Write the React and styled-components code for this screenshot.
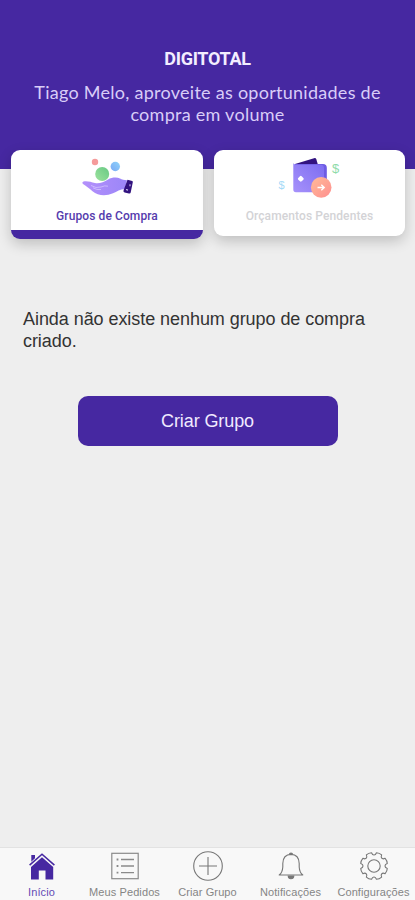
import { useState } from "react";
import styled, { createGlobalStyle } from "styled-components";

const purple = "#4628a1";

const GlobalStyle = createGlobalStyle`
    * {
        box-sizing: border-box;
    }

    body {
        margin: 0;
        background: #eeeeee;
    }
`;

const HandIcon = () => (
    <svg width="54" height="42" viewBox="80 156 54 42">
        <defs>
            <linearGradient id="hand" x1="0" y1="0" x2="1" y2="0">
                <stop offset="0" stopColor="#b490fb" />
                <stop offset="1" stopColor="#9b86f8" />
            </linearGradient>
            <linearGradient id="green" x1="1" y1="0" x2="0" y2="1">
                <stop offset="0" stopColor="#67c984" />
                <stop offset="1" stopColor="#9de29d" />
            </linearGradient>
            <linearGradient id="blue" x1="1" y1="0" x2="0" y2="1">
                <stop offset="0" stopColor="#8fd3fa" />
                <stop offset="1" stopColor="#7aa9f5" />
            </linearGradient>
        </defs>
        <circle cx="95" cy="162" r="3.2" fill="#f59b9b" />
        <circle cx="115.3" cy="166.5" r="4.7" fill="url(#blue)" />
        <path d="M83.5 181.5 C87 180.7 91 182 95 183 C99 184.2 104 181.6 108 179.4 C112 177.1 117 177 120 178.4 C122 179.4 124 180 127 180.2 L124.8 189 C120 189.4 117 191.5 113 193.3 C106 196.3 98 196 92.5 191.2 C89 188.2 86 186 83 184 C82 183 82.3 181.8 83.5 181.5 Z" fill="url(#hand)" />
        <path d="M91 185.5 Q96 188.7 101 187 Q105 185.2 108 186.2 M93 187.8 Q97 190.3 101 189.5" fill="none" stroke="#d9ccff" strokeWidth="0.7" />
        <circle cx="102.2" cy="174" r="7" fill="url(#green)" />
        <path d="M127.5 179.8 L132.2 181 Q133 181.4 132.8 182.2 L130.7 192.4 Q130.4 193.8 129 193.5 L124.6 192.4 Q123 192 123.6 190.3 Z" fill="#32137f" />
        <path d="M126 189.5 l2 0.6 M130 184.2 v2" stroke="#d5cbef" strokeWidth="1.1" />
    </svg>
);

const WalletIcon = () => (
    <svg width="66" height="42" viewBox="276 156 66 42">
        <defs>
            <linearGradient id="wallet" x1="1" y1="0" x2="0" y2="1">
                <stop offset="0" stopColor="#7c6cf0" />
                <stop offset="1" stopColor="#a792fb" />
            </linearGradient>
            <linearGradient id="coin" x1="0" y1="0" x2="1" y2="1">
                <stop offset="0" stopColor="#ffbb98" />
                <stop offset="1" stopColor="#ff8f8f" />
            </linearGradient>
        </defs>
        <path d="M294 164 L313 158.2 Q314.8 157.8 315.4 159.4 L317 165 H294 Z" fill="#32137f" />
        <path d="M293.5 164 H322 Q325.8 164 325.8 167.8 V189 Q325.8 192 322.8 192 H296 Z" fill="#6e5ce3" />
        <path d="M292.3 163 Q292.7 164.6 295 164.8 H320 Q323 165 323 168 V189.5 Q323 192.3 320 192.3 H295 Q292.3 192.3 292.3 189.5 Z" fill="url(#wallet)" />
        <rect x="297.4" y="176.4" width="4.8" height="4.8" rx="1.2" fill="#fff" transform="rotate(45 299.8 178.8)" />
        <circle cx="320.2" cy="187.4" r="10.3" fill="url(#coin)" />
        <path d="M316.5 187.5 H323 M320.3 184.8 L323.2 187.5 L320.3 190.2" fill="none" stroke="#fff" strokeWidth="1.4" />
        <text x="331" y="172.5" fontFamily="Liberation Sans, sans-serif" fontSize="13" fill="#8edba9">$</text>
        <text x="277.5" y="189" fontFamily="Liberation Sans, sans-serif" fontSize="11" fill="#a5daf7">$</text>
    </svg>
);

const HomeIcon = () => (
    <svg width="32" height="32" viewBox="0 0 32 32">
        <path d="M5.3 5 H9 V8.3 L5.3 11.7 Z" fill={purple} />
        <path d="M3.6 15.2 L16 4.2 L28.4 15.2" fill="none" stroke={purple} strokeWidth="1.6" />
        <path d="M16 7.2 L27.2 17 V29.4 H19.5 V20.6 H12.8 V29.4 H5 V17 Z" fill={purple} />
    </svg>
);

const ListIcon = () => (
    <svg width="32" height="32" viewBox="0 0 32 32" fill="none" stroke="#8a8a8a">
        <rect x="2.8" y="3.3" width="26.4" height="25.4" strokeWidth="1.2" />
        <path d="M12 9.5 H25 M12 16 H25 M12 22.7 H25" strokeWidth="1.3" />
        <path d="M7.6 9.5 H9.4 M7.6 16 H9.4 M7.6 22.7 H9.4" strokeWidth="1.8" />
    </svg>
);

const PlusIcon = () => (
    <svg width="32" height="32" viewBox="0 0 32 32" fill="none" stroke="#777" strokeWidth="1.1">
        <circle cx="16" cy="16" r="14.3" />
        <path d="M16 7 V25 M7 16 H25" />
    </svg>
);

const BellIcon = () => (
    <svg width="32" height="32" viewBox="0 0 32 32" fill="none" stroke="#777" strokeWidth="1.1">
        <path d="M4.2 25 Q7.5 22.5 7.8 17 V13.5 Q8 4.6 16 4.4 Q24 4.6 24.2 13.5 V17 Q24.5 22.5 27.8 25 Z" strokeLinejoin="round" />
        <path d="M14.5 4.2 Q14.5 3 16 3 Q17.5 3 17.5 4.2" fill="#777" />
        <path d="M13.2 26 H18.8 Q18.6 28.8 16 28.8 Q13.4 28.8 13.2 26 Z" fill="#777" />
    </svg>
);

// eight teeth, each one drawn from valley to valley
const gearPoint = (deg, r) => {
    const a = (deg * Math.PI) / 180;
    return `${(16 + r * Math.cos(a)).toFixed(2)} ${(16 + r * Math.sin(a)).toFixed(2)}`;
};

const gearPath = Array.from({ length: 8 }, (_, i) => {
    const c = i * 45 + 22.5;
    return `${i ? "L" : "M"}${gearPoint(c - 12, 13.5)} Q${gearPoint(c, 14.2)} ${gearPoint(c + 12, 13.5)} Q${gearPoint(c + 14.5, 11)} ${gearPoint(c + 22.5, 11)} Q${gearPoint(c + 30.5, 11)} ${gearPoint(c + 33, 13.5)}`;
}).join(" ") + "Z";

const GearIcon = () => (
    <svg width="32" height="32" viewBox="0 0 32 32" fill="none" stroke="#777" strokeWidth="1.1">
        <path d={gearPath} strokeLinejoin="round" />
        <circle cx="16" cy="16" r="6.2" />
    </svg>
);

const tabs = [
    { label: "Início", Icon: HomeIcon },
    { label: "Meus Pedidos", Icon: ListIcon },
    { label: "Criar Grupo", Icon: PlusIcon },
    { label: "Notificações", Icon: BellIcon },
    { label: "Configurações", Icon: GearIcon },
];

export default function App() {
    const [current, setCurrent] = useState("Início");

    return (
        <Screen>
            <GlobalStyle />

            <Header>
                <Company>DIGITOTAL</Company>
                <Welcome>
                    Tiago Melo, aproveite as oportunidades de
                    <br />
                    compra em volume
                </Welcome>
            </Header>

            <Cards>
                <Card $active>
                    <HandIcon />
                    <CardLabel $active>Grupos de Compra</CardLabel>
                </Card>
                <Card>
                    <WalletIcon />
                    <CardLabel>Orçamentos Pendentes</CardLabel>
                </Card>
            </Cards>

            <Content>
                <EmptyMessage>
                    Ainda não existe nenhum grupo de compra
                    <br />
                    criado.
                </EmptyMessage>
                <CreateButton>Criar Grupo</CreateButton>
            </Content>

            <TabBar>
                {tabs.map(({ label, Icon }) => (
                    <Tab key={label} $active={label === current} onClick={() => setCurrent(label)}>
                        <Icon />
                        <span>{label}</span>
                    </Tab>
                ))}
            </TabBar>
        </Screen>
    );
}

const Screen = styled.div`
    display: flex;
    flex-direction: column;
    height: 900px;
    overflow: hidden;
    background: #eeeeee;
    font-family: "Liberation Sans", Arial, sans-serif;
`;

const Header = styled.header`
    height: 169px;
    flex-shrink: 0;
    padding-top: 48px;
    background: ${purple};
    text-align: center;
`;

const Company = styled.h1`
    margin: 0;
    color: #f3edff;
    font-family: Roboto, sans-serif;
    font-size: 18px;
    font-weight: 700;
    line-height: 22px;
    letter-spacing: -0.3px;
`;

const Welcome = styled.p`
    margin: 11px 0 0;
    color: #d9cdf8;
    font-family: Lato, sans-serif;
    font-size: 18px;
    line-height: 22px;
    letter-spacing: 0.27px;
    white-space: nowrap;
`;

const Cards = styled.div`
    display: grid;
    grid-template-columns: 192px 191px;
    column-gap: 11px;
    align-items: start;
    margin-top: -19px;
    padding-left: 11px;
`;

const Card = styled.div`
    display: flex;
    flex-direction: column;
    align-items: center;
    height: ${(props) => (props.$active ? "89px" : "86px")};
    padding-top: 6px;
    background: #fff;
    border-bottom: ${(props) => (props.$active ? `9px solid ${purple}` : "none")};
    border-radius: 9px;
    box-shadow: 0 5px 14px rgba(0, 0, 0, 0.2);

    svg {
        display: block;
    }
`;

const CardLabel = styled.span`
    margin-top: 11px;
    color: ${(props) => (props.$active ? "#553bad" : "#d3d3d6")};
    font-family: Roboto, sans-serif;
    font-size: 12px;
    font-weight: 500;
    line-height: 14px;
    letter-spacing: ${(props) => (props.$active ? "0.1px" : "0.1px")};
    white-space: nowrap;
`;

const Content = styled.main`
    flex: 1;
    display: flex;
    flex-direction: column;
    padding: 69px 22px 0;
`;

const EmptyMessage = styled.p`
    margin: 0 0 0 1px;
    color: #333;
    font-size: 18px;
    line-height: 22px;
    letter-spacing: -0.06px;
    white-space: nowrap;
`;

const CreateButton = styled.button`
    align-self: center;
    width: 260px;
    height: 50px;
    margin-top: 44px;
    border: none;
    border-radius: 10px;
    background: ${purple};
    color: #f0eaff;
    font-family: inherit;
    font-size: 18px;
    letter-spacing: -0.1px;
`;

const TabBar = styled.nav`
    display: grid;
    grid-template-columns: repeat(5, 1fr);
    height: 53px;
    flex-shrink: 0;
    padding-top: 2px;
    border-top: 1px solid #e2e2e2;
    background: #f8f8f8;
`;

const Tab = styled.button`
    display: flex;
    flex-direction: column;
    align-items: center;
    padding: 0;
    border: none;
    background: none;
    color: ${(props) => (props.$active ? "#644bb5" : "#858585")};
    font-family: inherit;
    font-size: 11px;
    line-height: 12px;
    letter-spacing: 0.1px;
    white-space: nowrap;

    svg {
        display: block;
    }

    span {
        margin-top: 4px;
    }
`;
